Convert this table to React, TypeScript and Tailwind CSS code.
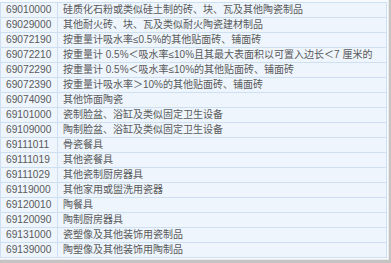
import React from "react";

const rows: [string, string][] = [
  ["69010000", "硅质化石粉或类似硅土制的砖、块、瓦及其他陶瓷制品"],
  ["69029000", "其他耐火砖、块、瓦及类似耐火陶瓷建材制品"],
  ["69072190", "按重量计吸水率≤0.5%的其他贴面砖、铺面砖"],
  ["69072210", "按重量计 0.5%＜吸水率≤10%且其最大表面积以可置入边长＜7 厘米的"],
  ["69072290", "按重量计 0.5%＜吸水率≤10%的其他贴面砖、铺面砖"],
  ["69072390", "按重量计吸水率＞10%的其他贴面砖、铺面砖"],
  ["69074090", "其他饰面陶瓷"],
  ["69101000", "瓷制脸盆、浴缸及类似固定卫生设备"],
  ["69109000", "陶制脸盆、浴缸及类似固定卫生设备"],
  ["69111011", "骨瓷餐具"],
  ["69111019", "其他瓷餐具"],
  ["69111029", "其他瓷制厨房器具"],
  ["69119000", "其他家用或盥洗用瓷器"],
  ["69120010", "陶餐具"],
  ["69120090", "陶制厨房器具"],
  ["69131000", "瓷塑像及其他装饰用瓷制品"],
  ["69139000", "陶塑像及其他装饰用陶制品"],
];

export default function App() {
  return (
    <div
      className="w-[391px] h-[263px] overflow-hidden bg-[#c4c4c4]"
      style={{ fontFamily: '"Liberation Sans", "Noto Sans CJK SC", sans-serif' }}
    >
      <div className="w-[389px] h-[260px] bg-[#f7fafe] pt-[2px] border-r border-b border-[#e8e8e8]">
        <div className="w-[387px] border-t border-l border-r border-[#cfdff2] bg-[#eef5fd]">
          {rows.map(([code, name]) => (
            <div key={code} className="flex h-[15px] border-b border-[#cfdff2] text-[#5a5a5a]">
              <div className="w-[57px] shrink-0 border-r border-[#cfdff2] pl-[5px] text-[10.2px] leading-[14px]">
                {code}
              </div>
              <div className="flex-1 pl-[5px] text-[10px] leading-[14px] whitespace-nowrap overflow-hidden">
                {name}
              </div>
            </div>
          ))}
        </div>
      </div>
    </div>
  );
}
